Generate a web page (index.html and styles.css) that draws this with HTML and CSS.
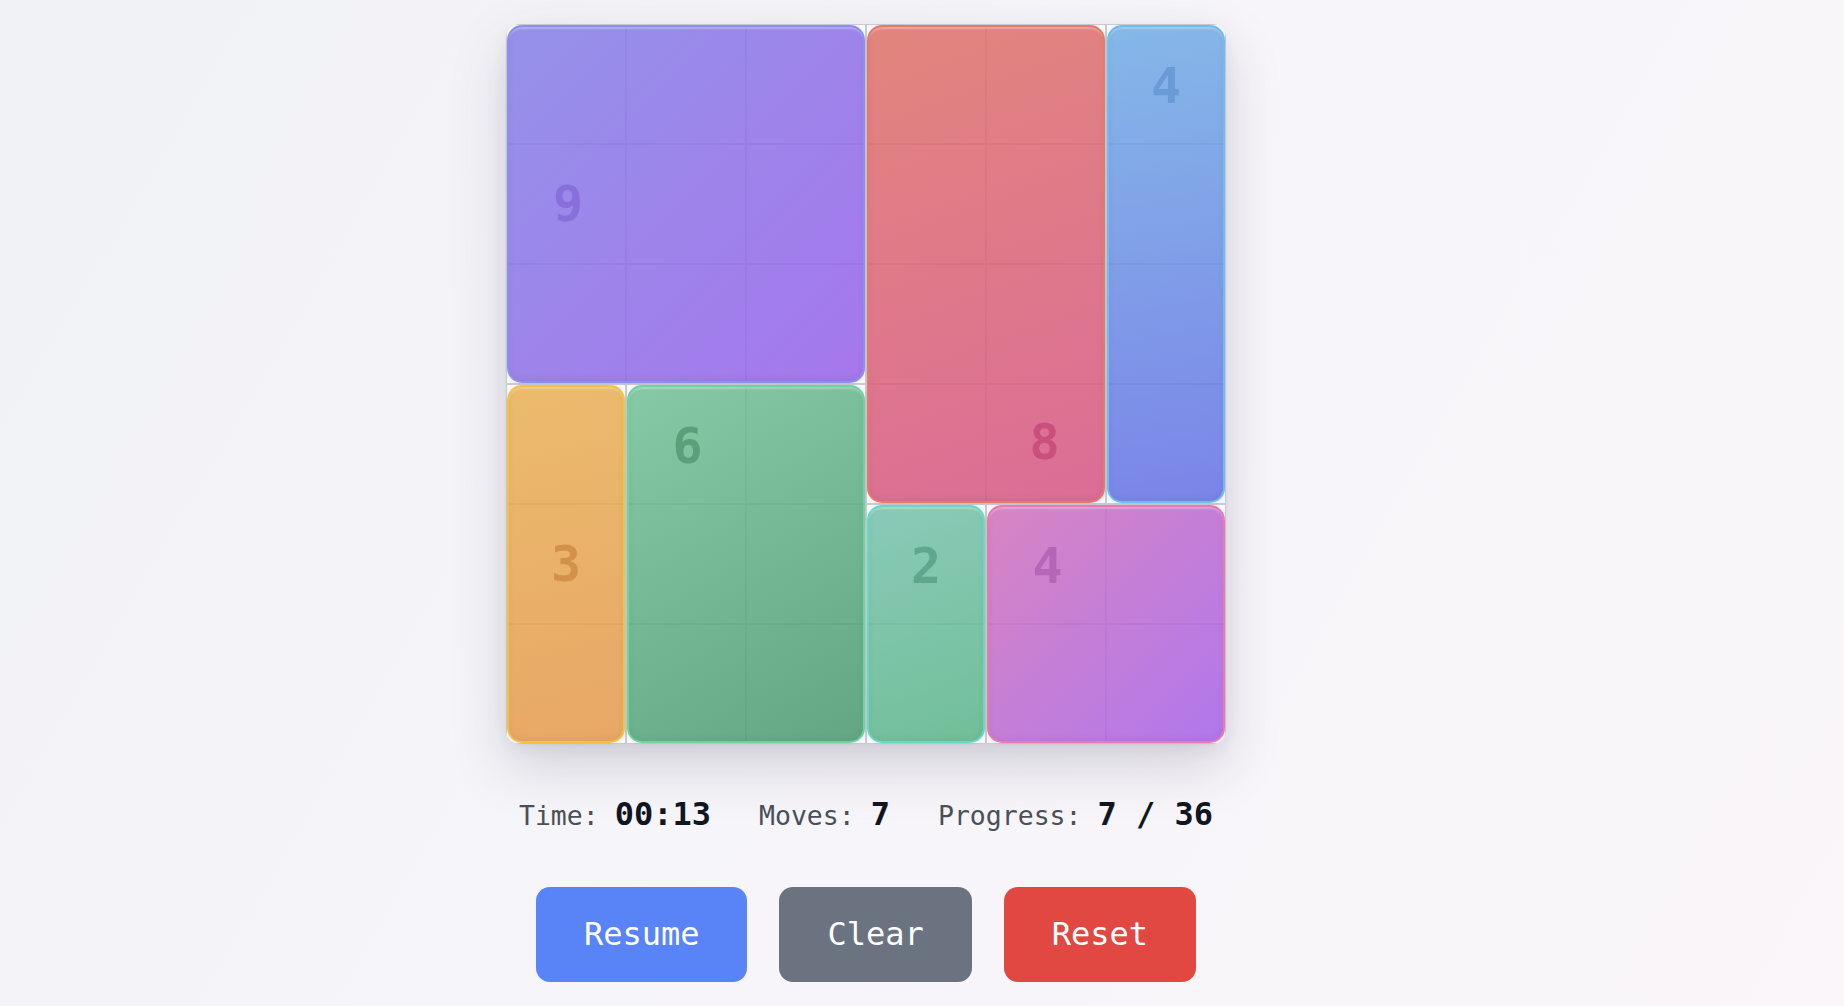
FILE: index.html
```html
<!DOCTYPE html>
<html lang="en">
<head>
<meta charset="utf-8">
<title>Rectangles Puzzle</title>
<link rel="stylesheet" href="styles.css">
</head>
<body>
<div class="page">
  <main class="game">
    <div class="board">
      <div class="cells">
        <div class="cell"></div><div class="cell"></div><div class="cell"></div><div class="cell"></div><div class="cell"></div><div class="cell"></div>
        <div class="cell"></div><div class="cell"></div><div class="cell"></div><div class="cell"></div><div class="cell"></div><div class="cell"></div>
        <div class="cell"></div><div class="cell"></div><div class="cell"></div><div class="cell"></div><div class="cell"></div><div class="cell"></div>
        <div class="cell"></div><div class="cell"></div><div class="cell"></div><div class="cell"></div><div class="cell"></div><div class="cell"></div>
        <div class="cell"></div><div class="cell"></div><div class="cell"></div><div class="cell"></div><div class="cell"></div><div class="cell"></div>
        <div class="cell"></div><div class="cell"></div><div class="cell"></div><div class="cell"></div><div class="cell"></div><div class="cell"></div>
      </div>
      <div class="pieces">
        <div class="piece p-purple"><span class="num">9</span></div>
        <div class="piece p-red"><span class="num">8</span></div>
        <div class="piece p-blue"><span class="num">4</span></div>
        <div class="piece p-yellow"><span class="num">3</span></div>
        <div class="piece p-green"><span class="num">6</span></div>
        <div class="piece p-teal"><span class="num">2</span></div>
        <div class="piece p-pink"><span class="num">4</span></div>
      </div>
    </div>

    <div class="stats">
      <div class="stat"><span class="label">Time: </span><span class="value">00:13</span></div>
      <div class="stat"><span class="label">Moves: </span><span class="value">7</span></div>
      <div class="stat"><span class="label">Progress: </span><span class="value">7 / 36</span></div>
    </div>

    <div class="controls">
      <button class="btn btn-resume">Resume</button>
      <button class="btn btn-clear">Clear</button>
      <button class="btn btn-reset">Reset</button>
    </div>
  </main>
</div>
</body>
</html>
```
FILE: styles.css
```css
* { box-sizing: border-box; }

html, body {
  margin: 0;
  height: 100%;
}

body {
  font-family: "DejaVu Sans Mono", "Liberation Mono", monospace;
  background: linear-gradient(120deg, #f1f2f6 0%, #f6f5f9 45%, #faf6fa 100%);
  overflow: hidden;
}

.page {
  display: flex;
  justify-content: center;
  padding: 24px 112px 0 0;
}

.game {
  display: flex;
  flex-direction: column;
  align-items: center;
}

/* ---------- board ---------- */
.board {
  position: relative;
  width: 720px;
  height: 720px;
  border-radius: 14px;
  background: #f4f4f7;
  box-shadow: 0 22px 55px rgba(40, 40, 70, 0.17), 0 6px 16px rgba(40, 40, 70, 0.06);
}

.cells {
  display: grid;
  grid-template-columns: repeat(6, 120px);
  grid-template-rows: repeat(6, 120px);
  width: 720px;
  height: 720px;
  border-radius: 14px;
  overflow: hidden;
}

.cell {
  border: 1px solid #c9c9d3;
  background: #f8f8fb;
}

.pieces {
  position: absolute;
  inset: 0;
  display: grid;
  grid-template-columns: repeat(6, 120px);
  grid-template-rows: repeat(6, 120px);
}

.piece {
  margin: 1px;
  border: 2.5px solid;
  border-radius: 15px;
  display: grid;
  box-shadow: inset 0 3px 2px -1px rgba(255, 255, 255, 0.3), inset 0 -2px 6px rgba(0, 0, 0, 0.05), 0 1px 3px rgba(0, 0, 0, 0.06);
}

.num {
  align-self: center;
  justify-self: center;
  font-family: "DejaVu Sans Mono", monospace;
  font-weight: bold;
  font-size: 50px;
  line-height: 1;
}

.p-purple {
  grid-column: 1 / 4;
  grid-row: 1 / 4;
  grid-template-columns: repeat(3, 1fr);
  grid-template-rows: repeat(3, 1fr);
  border-color: #8a90f2;
  background: linear-gradient(135deg, rgba(134, 130, 231, 0.87), rgba(153, 100, 233, 0.87));
}
.p-purple .num { grid-column: 1; grid-row: 2; color: #8770db; }

.p-red {
  grid-column: 4 / 6;
  grid-row: 1 / 5;
  grid-template-columns: repeat(2, 1fr);
  grid-template-rows: repeat(4, 1fr);
  border-color: #e6786c;
  background: linear-gradient(160deg, rgba(223, 116, 106, 0.87), rgba(215, 88, 136, 0.87));
}
.p-red .num { grid-column: 2; grid-row: 4; color: #c94f7c; }

.p-blue {
  grid-column: 6 / 7;
  grid-row: 1 / 5;
  grid-template-columns: 1fr;
  grid-template-rows: repeat(4, 1fr);
  border-color: #6cbdf2;
  background: linear-gradient(170deg, rgba(116, 174, 229, 0.87), rgba(104, 115, 229, 0.87));
}
.p-blue .num { grid-column: 1; grid-row: 1; color: #6b9ad8; }

.p-yellow {
  grid-column: 1 / 2;
  grid-row: 4 / 7;
  grid-template-columns: 1fr;
  grid-template-rows: repeat(3, 1fr);
  border-color: #f3c23e;
  background: linear-gradient(165deg, rgba(233, 178, 88, 0.87), rgba(230, 155, 80, 0.87));
}
.p-yellow .num { grid-column: 1; grid-row: 2; color: #d3914a; }

.p-green {
  grid-column: 2 / 4;
  grid-row: 4 / 7;
  grid-template-columns: repeat(2, 1fr);
  grid-template-rows: repeat(3, 1fr);
  border-color: #6dd39f;
  background: linear-gradient(150deg, rgba(117, 194, 153, 0.87), rgba(77, 154, 115, 0.87));
}
.p-green .num { grid-column: 1; grid-row: 1; color: #5a9f7a; }

.p-teal {
  grid-column: 4 / 5;
  grid-row: 5 / 7;
  grid-template-columns: 1fr;
  grid-template-rows: repeat(2, 1fr);
  border-color: #63dbc3;
  background: linear-gradient(160deg, rgba(120, 195, 174, 0.87), rgba(94, 182, 138, 0.87));
}
.p-teal .num { grid-column: 1; grid-row: 1; color: #5ea78c; }

.p-pink {
  grid-column: 5 / 7;
  grid-row: 5 / 7;
  grid-template-columns: repeat(2, 1fr);
  grid-template-rows: repeat(2, 1fr);
  border-color: #eb78ae;
  background: linear-gradient(135deg, rgba(211, 116, 186, 0.87), rgba(166, 100, 233, 0.87));
}
.p-pink .num { grid-column: 1; grid-row: 1; color: #b566b6; }

/* ---------- stats ---------- */
.stats {
  display: flex;
  align-items: baseline;
  gap: 48px;
  margin-top: 51px;
}

.stat { white-space: pre; }

.label {
  font-size: 26.5px;
  color: #4b5058;
}

.value {
  font-size: 32px;
  font-weight: bold;
  color: #111623;
}

/* ---------- buttons ---------- */
.controls {
  display: flex;
  gap: 32px;
  margin-top: 54px;
}

.btn {
  font-family: "DejaVu Sans Mono", monospace;
  font-size: 32px;
  line-height: 37px;
  color: #ffffff;
  border: none;
  border-radius: 14px;
  padding: 29px 48px;
  cursor: pointer;
}

.btn-resume { background: #5884f8; }
.btn-clear { background: #6b7280; }
.btn-reset { background: #e04841; }
```
